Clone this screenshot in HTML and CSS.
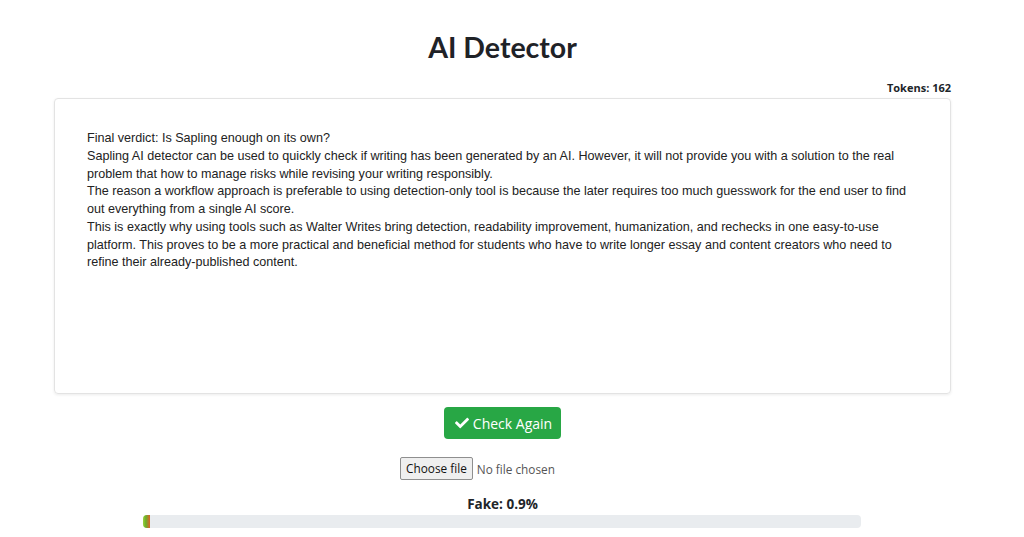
FILE: index.html
```html
<!DOCTYPE html>
<html>
<head>
<meta charset="utf-8">
<link rel="stylesheet" href="styles.css">
</head>
<body>
<div class="page">
  <h1 class="title">AI Detector</h1>
  <div class="tokens">Tokens: 162</div>
  <div class="editor">
    <p>Final verdict: Is Sapling enough on its own?<br>
Sapling AI detector can be used to quickly check if writing has been generated by an AI. However, it will not provide you with a solution to the real problem that how to manage risks while revising your writing responsibly.<br>
The reason a workflow approach is preferable to using detection-only tool is because the later requires too much guesswork for the end user to find out everything from a single AI score.<br>
This is exactly why using tools such as Walter Writes bring detection, readability improvement, humanization, and rechecks in one easy-to-use platform. This proves to be a more practical and beneficial method for students who have to write longer essay and content creators who need to refine their already-published content.</p>
  </div>
  <div class="actions">
    <button class="btn-check"><svg class="check" viewBox="0 0 512 512" width="14" height="14"><path fill="#fff" d="M173.9 439.4l-166.4-166.4c-10-10-10-26.2 0-36.2l36.2-36.2c10-10 26.2-10 36.2 0L192 312.7 432.1 72.6c10-10 26.2-10 36.2 0l36.2 36.2c10 10 10 26.2 0 36.2L210.1 439.4c-10 10-26.2 10-36.2 0z"/></svg>Check Again</button>
  </div>
  <div class="file-row">
    <span class="file-btn">Choose file</span><span class="file-text">No file chosen</span>
  </div>
  <div class="result">Fake: 0.9%</div>
  <div class="bar"><div class="fill" style="width:1%"></div></div>
</div>
</body>
</html>
```
FILE: styles.css
```css
html, body {
  margin: 0;
  padding: 0;
  background: #fff;
}
.page {
  width: 897px;
  margin: 0 0 0 54px;
  display: flex;
  flex-direction: column;
  align-items: stretch;
  font-family: "Open Sans", "Liberation Sans", sans-serif;
  color: #212529;
}
.title {
  margin: 29px 0 0;
  text-align: center;
  font-family: "Lato", "Open Sans", sans-serif;
  font-weight: 700;
  font-size: 28.5px;
  line-height: 36px;
  color: #1f2227;
}
.tokens {
  text-align: right;
  font-size: 11px;
  font-weight: 700;
  line-height: 14px;
  margin-top: 16px;
  margin-bottom: 3px;
}
.editor {
  height: 296px;
  border: 1px solid #e3e3e3;
  border-radius: 4px;
  box-shadow: 0 1px 3px rgba(0,0,0,0.08);
  padding: 31px 31px 0 32px;
  box-sizing: border-box;
}
.editor p {
  margin: 0;
  font-family: "Liberation Sans", Arial, sans-serif;
  font-size: 12.6px;
  line-height: 17.75px;
  color: #222;
}
.actions {
  display: flex;
  justify-content: center;
  margin-top: 13px;
}
.btn-check {
  display: flex;
  align-items: center;
  gap: 4px;
  background: #28a745;
  color: #fff;
  border: none;
  border-radius: 4px;
  height: 32px;
  padding: 0 9px 0 11px;
  font-family: "Open Sans", sans-serif;
  font-size: 14px;
}
.file-row {
  display: flex;
  justify-content: center;
  align-items: center;
  margin-top: 18px;
  margin-left: -50px;
  font-family: "Open Sans", sans-serif;
  font-size: 11.8px;
}
.file-btn {
  border: 1px solid #8f8f8f;
  background: #efefef;
  border-radius: 2px;
  padding: 2px 5px;
  line-height: 17px;
  color: #111;
}
.file-text {
  margin-left: 4px;
  color: #555;
}
.result {
  text-align: center;
  font-weight: 700;
  font-size: 13.5px;
  line-height: 18px;
  margin-top: 15px;
}
.bar {
  width: 718px;
  height: 13px;
  margin: 2px 0 0 89px;
  background: #e9ecef;
  border-radius: 4px;
  overflow: hidden;
}
.fill {
  height: 100%;
  background: linear-gradient(to right, #9bd13a, #6ab02a 40%, #e0602b);
}
```
